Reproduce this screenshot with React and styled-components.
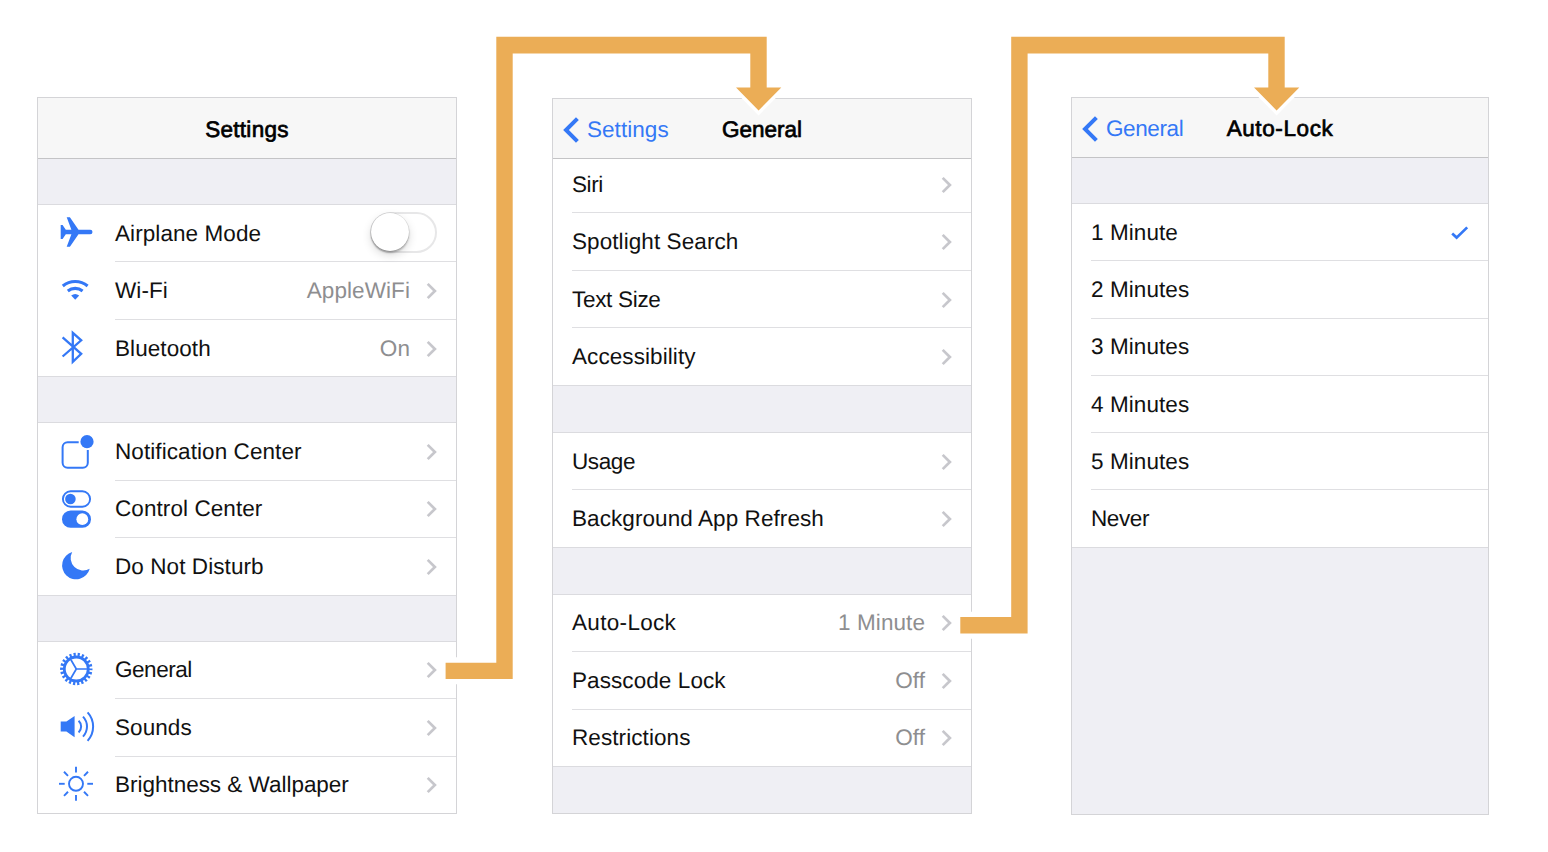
import React from 'react'
import styled, { createGlobalStyle } from 'styled-components';

const BLUE = '#3478f6';

const AirplaneIcon = () => (
  <Icon viewBox='0 0 36 36'>
    <path fill={BLUE} d='M2.7 10h1.9l3.2 4.7h5.6L8.7 2.3h3.2l8.6 12.4h11.7a2.3 2.3 0 0 1 0 4.6H20.5L11.9 31.7H8.7l4.7-12.4H7.8L4.6 24H2.7z' />
  </Icon>
)

const WifiIcon = () => (
  <Icon viewBox='0 0 36 36'>
    <g fill='none' stroke={BLUE} strokeWidth='3.1'>
      <path d='M4.8 13A19.4 19.4 0 0 1 29.6 13' />
      <path d='M9.8 17.9A12.2 12.2 0 0 1 24.6 17.9' />
    </g>
    <path fill={BLUE} d='M13.2 22.4Q17.2 19.4 21.2 22.4L17.2 26.8z' />
  </Icon>
)

const BluetoothIcon = () => (
  <Icon viewBox='0 0 36 36'>
    <path fill='none' stroke={BLUE} strokeWidth='2.3' d='M4.6 7.4L23.2 23.8L14.8 31.9V2.9L23.2 10.3L4.6 26.5' />
  </Icon>
)

const NotificationIcon = () => (
  <Icon viewBox='0 0 36 36'>
    <path fill='none' stroke={BLUE} strokeWidth='2' d='M20.7 8.2H9.6a5 5 0 0 0-5 5V28.7a5 5 0 0 0 5 5H24.8a5 5 0 0 0 5-5V16' />
    <circle cx='29' cy='7.7' r='6.6' fill={BLUE} />
  </Icon>
)

const ControlIcon = () => (
  <Icon viewBox='0 0 36 36'>
    <rect x='4.9' y='0.3' width='27.2' height='15.4' rx='7.7' fill='none' stroke={BLUE} strokeWidth='1.9' />
    <circle cx='12.4' cy='8' r='5.3' fill={BLUE} />
    <rect x='4' y='19.6' width='29' height='17.2' rx='8.6' fill={BLUE} />
    <circle cx='24.3' cy='28.2' r='5.9' fill='#fff' />
  </Icon>
)

const MoonIcon = () => (
  <Icon viewBox='0 0 36 36'>
    <path fill={BLUE} d='M14.2 3.9A14 14 0 1 0 31.7 20.8A12.6 12.6 0 0 1 14.2 3.9z' />
  </Icon>
)

const GearIcon = () => (
  <Icon viewBox='0 0 36 36'>
    <g fill='none' stroke={BLUE}>
      <circle cx='18.3' cy='17' r='14.4' strokeWidth='3.6' strokeDasharray='2.2 1.91' strokeDashoffset='1.1' />
      <circle cx='18.3' cy='17' r='12' strokeWidth='2.8' />
      <path strokeWidth='1.7' d='M18.3 17H29M18.3 17L12.9 7.7M18.3 17L12.9 26.3' />
    </g>
  </Icon>
)

const SoundIcon = () => (
  <Icon viewBox='0 0 36 36'>
    <path fill={BLUE} d='M2.7 12.6H8.4L16.6 7V28.2L8.4 22.6H2.7z' />
    <g fill='none' stroke={BLUE} strokeWidth='2'>
      <path d='M20.6 11.7A8 8 0 0 1 20.6 23.4' />
      <path d='M25 7.6A14.5 14.5 0 0 1 25 27.6' />
      <path d='M29.6 3.3A21.3 21.3 0 0 1 29.6 31.9' />
    </g>
  </Icon>
)

const BrightnessIcon = () => (
  <Icon viewBox='0 0 36 36'>
    <g fill='none' stroke={BLUE} strokeWidth='1.9'>
      <circle cx='18' cy='17.8' r='7' />
      {[0, 45, 90, 135, 180, 225, 270, 315].map(angle => (
        <path key={angle} d='M29.3 17.8H35' transform={`rotate(${angle} 18 17.8)`} />
      ))}
    </g>
  </Icon>
)

const settings = [
  [
    { text: 'Airplane Mode', icon: <AirplaneIcon />, toggle: true },
    { text: 'Wi-Fi', icon: <WifiIcon />, value: 'AppleWiFi' },
    { text: 'Bluetooth', icon: <BluetoothIcon />, value: 'On' },
  ],
  [
    { text: 'Notification Center', icon: <NotificationIcon /> },
    { text: 'Control Center', icon: <ControlIcon /> },
    { text: 'Do Not Disturb', icon: <MoonIcon /> },
  ],
  [
    { text: 'General', icon: <GearIcon />, track: -0.45 },
    { text: 'Sounds', icon: <SoundIcon /> },
    { text: 'Brightness & Wallpaper', icon: <BrightnessIcon />, track: -0.02 },
  ],
]

const general = [
  [
    { text: 'Siri', short: true, track: -0.4 },
    { text: 'Spotlight Search' },
    { text: 'Text Size', track: -0.3 },
    { text: 'Accessibility' },
  ],
  [
    { text: 'Usage', track: -0.4 },
    { text: 'Background App Refresh' },
  ],
  [
    { text: 'Auto-Lock', value: '1 Minute', track: 0.32 },
    { text: 'Passcode Lock', value: 'Off' },
    { text: 'Restrictions', value: 'Off' },
  ],
]

const autoLock = [
  [
    { text: '1 Minute', checked: true },
    { text: '2 Minutes' },
    { text: '3 Minutes' },
    { text: '4 Minutes' },
    { text: '5 Minutes' },
    { text: 'Never', track: -0.4 },
  ],
]

const Chevron = () => (
  <ChevronSvg viewBox='0 0 11 18'>
    <path fill='none' stroke='#c7c7cc' strokeWidth='2.7' d='M1.7 1.9L8.9 9L1.7 16.1' />
  </ChevronSvg>
)

const Check = () => (
  <CheckSvg viewBox='0 0 18 14'>
    <path fill='none' stroke={BLUE} strokeWidth='2.7' d='M1.2 7.6L5.6 11.6L16.2 1.4' />
  </CheckSvg>
)

const ListGroup = ({ items, rowHeight, first, choice }) => (
  <Group $first={first}>
    {items.map(item => (
      <Row key={item.text} $height={item.short ? 54.3 : rowHeight}>
        {item.icon && <IconBox>{item.icon}</IconBox>}
        <Cell $up={item.short}>
          <Label $track={item.track}>{item.text}</Label>
          {item.toggle && <Switch><Knob /></Switch>}
          {item.value && <Value>{item.value}</Value>}
          {item.checked && <Check />}
          {!choice && !item.toggle && <Chevron />}
        </Cell>
      </Row>
    ))}
  </Group>
)

const Phone = ({ title, back, groups, rowHeight, space, flush, choice, ...place }) => (
  <Panel $top={place.top} $width={place.width} $height={place.height}>
    <NavBar $height={place.bar}>
      <Back $track={place.backTrack}>
        {back &&
          <>
            <BackSvg viewBox='0 0 18 28'>
              <path fill='none' stroke={BLUE} strokeWidth='4' d='M15.4 2.6L4 14L15.4 25.4' />
            </BackSvg>
            {back}
          </>
        }
      </Back>
      <Title $track={place.titleTrack}>{title}</Title>
    </NavBar>
    <Content>
      {groups.map((items, i) => (
        <React.Fragment key={i}>
          {!(flush && i === 0) && <Spacer $height={space} />}
          <ListGroup items={items} rowHeight={rowHeight} first={flush && i === 0} choice={choice} />
        </React.Fragment>
      ))}
    </Content>
  </Panel>
)

const Arrows = () => (
  <ArrowLayer viewBox='0 0 1548 852'>
    <g fill='none' stroke='#fff' strokeWidth='27'>
      <path d='M442 670.8H480' />
      <path d='M956 625.3H1000' />
    </g>
    <g fill='#ebad56' stroke='#fff' strokeWidth='7' paintOrder='stroke'>
      <path d='M445.6 662.7H496.3V36.8H766.7V87.4H781.3L758.6 110.5L736 87.4H750.3V53.4H512.7V679H445.6z' />
      <path d='M960.3 617H1011.2V36.8H1284.7V87.4H1299.3L1276.6 110.5L1254 87.4H1268.3V53.4H1027.6V633.4H960.3z' />
    </g>
  </ArrowLayer>
)

const App = () => {
  return (
    <>
      <GlobalStyle />
      <Board>
        <Phone title='Settings' groups={settings} rowHeight={57.45} space={45} top={97} width={420} height={717} bar={61} titleTrack={0.3} />
        <Phone title='General' back='Settings' groups={general} rowHeight={57.55} space={45.8} flush top={98} width={420} height={716} bar={60} titleTrack={0} backTrack={0.05} />
        <Phone title='Auto-Lock' back='General' groups={autoLock} rowHeight={57.3} space={45} choice top={97} width={418} height={718} bar={60} titleTrack={0.6} backTrack={-0.4} />
        <Arrows />
      </Board>
    </>
  )
}

export default App

// Styled components

const GlobalStyle = createGlobalStyle`
  * {
    box-sizing: border-box;
  }

  body {
    margin: 0;
    background: #fff;
    font-family: 'Liberation Sans', Arial, sans-serif;
    text-rendering: geometricPrecision;
  }
`

const Board = styled.main`
  position: relative;
  display: flex;
  align-items: flex-start;
  width: 1548px;
  height: 852px;
  padding-left: 37px;
  overflow: hidden;
`

const Panel = styled.section`
  display: flex;
  flex-direction: column;
  flex-shrink: 0;
  width: ${p => p.$width}px;
  height: ${p => p.$height}px;
  margin-top: ${p => p.$top}px;
  border: 1px solid #d4d4d7;
  background: #efeff4;
  overflow: hidden;

  & + & {
    margin-left: 95px;
  }

  & + & + & {
    margin-left: 99px;
  }
`

const NavBar = styled.header`
  display: grid;
  grid-template-columns: 1fr auto 1fr;
  align-items: center;
  flex-shrink: 0;
  height: ${p => p.$height}px;
  padding-top: 3px;
  border-bottom: 1px solid #c4c4c6;
  background: #f7f7f7;
  font-size: 22.5px;
`

const Back = styled.div`
  display: flex;
  align-items: center;
  padding-left: 9px;
  color: ${BLUE};
  letter-spacing: ${p => p.$track || 0}px;
`

const BackSvg = styled.svg`
  width: 18px;
  height: 28px;
  margin-right: 7px;
`

const Title = styled.h1`
  margin: 0;
  color: #000;
  font-size: 22.5px;
  font-weight: 400;
  letter-spacing: ${p => p.$track}px;
  -webkit-text-stroke: 0.7px #000;
`

const Content = styled.div`
  flex: 1;
  min-height: 0;
  overflow: hidden;
`

const Spacer = styled.div`
  height: ${p => p.$height}px;
`

const Group = styled.div`
  border-top: ${p => p.$first ? 'none' : '1px solid #dbdbdf'};
  background: #fff;
`

const Row = styled.div`
  display: flex;
  height: ${p => p.$height}px;
  padding-left: 19px;

  &:last-child {
    border-bottom: 1px solid #dbdbdf;
  }

  &:last-child > div {
    border-bottom: none;
  }
`

const IconBox = styled.span`
  display: flex;
  align-items: center;
  width: 58px;
  margin-left: 1px;
  margin-right: -1px;
  padding-bottom: 1px;
`

const Icon = styled.svg`
  width: 36px;
  height: 36px;
  overflow: visible;
`

const Cell = styled.div`
  display: flex;
  align-items: center;
  flex: 1;
  padding-right: 19px;
  padding-top: 1px;
  padding-bottom: ${p => p.$up ? 3 : 0}px;
  border-bottom: 1px solid #dfdfe2;
`

const Label = styled.span`
  flex: 1;
  color: #111;
  font-size: 22.5px;
  letter-spacing: ${p => p.$track ?? 0.08}px;
`

const Value = styled.span`
  margin-right: 16px;
  color: #8e8e90;
  font-size: 22.5px;
  letter-spacing: 0.08px;
`

const ChevronSvg = styled.svg`
  width: 11px;
  height: 18px;
`

const CheckSvg = styled.svg`
  width: 18px;
  height: 14px;
`

const Switch = styled.span`
  width: 67px;
  height: 41px;
  margin-bottom: 3px;
  border: 2px solid #e7e7e8;
  border-radius: 21px;
  background: #fff;
`

const Knob = styled.span`
  display: block;
  width: 38px;
  height: 38px;
  margin: -1px 0 0 -1px;
  border-radius: 50%;
  background: #fff;
  box-shadow: 0 0 0 0.5px rgba(0, 0, 0, 0.12), 0 2px 2px rgba(0, 0, 0, 0.25), 0 4px 10px rgba(0, 0, 0, 0.15);
`

const ArrowLayer = styled.svg`
  position: absolute;
  top: 0;
  left: 0;
  width: 1548px;
  height: 852px;
  pointer-events: none;
`
